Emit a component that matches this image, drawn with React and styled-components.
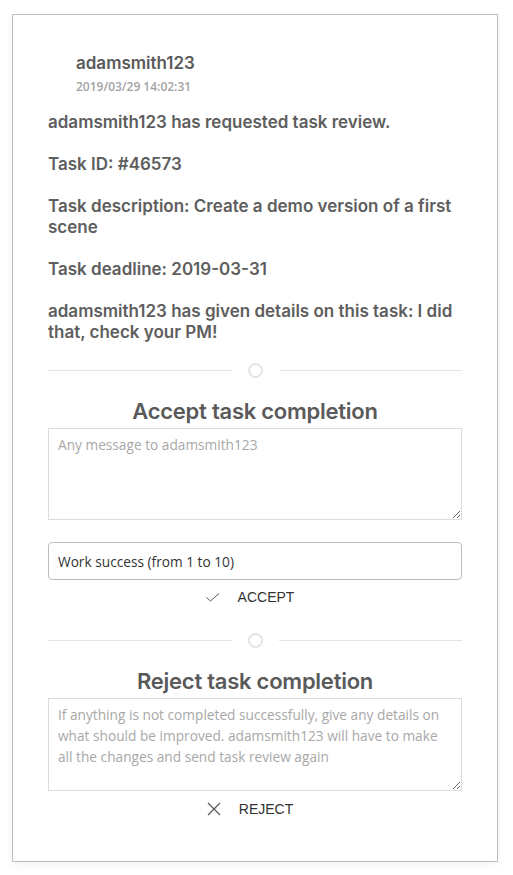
import React from "react";
import styled, { createGlobalStyle } from "styled-components";

const Global = createGlobalStyle`
  html, body { margin: 0; padding: 0; background: #fff; }
  body { font-family: "Inter", "Open Sans", sans-serif; }
  * { box-sizing: border-box; }
`;

const Page = styled.div`
  padding: 14px 15px 12px 12px;
  width: 513px;
`;

const Card = styled.div`
  border: 1px solid #bdbdbd;
  background: #fff;
  box-shadow: 0 2px 8px rgba(0, 0, 0, 0.06);
  padding: 37px 35px 43px 35px;
  display: flex;
  flex-direction: column;
`;

const Header = styled.div`
  display: flex;
  align-items: flex-start;
  gap: 8px;
`;

const Avatar = styled.div`
  width: 20px;
  height: 20px;
  flex: none;
`;

const Who = styled.div`
  display: flex;
  flex-direction: column;
`;

const UserName = styled.div`
  font-family: "Inter", sans-serif;
  font-weight: 600;
  font-size: 17px;
  line-height: 22px;
  color: #5a5a5a;
`;

const Stamp = styled.div`
  font-family: "Open Sans", sans-serif;
  font-weight: 600;
  font-size: 12px;
  line-height: 16px;
  color: #a3a3a3;
  margin-top: 5px;
`;

const Body = styled.div`
  margin-top: 17px;
  display: flex;
  flex-direction: column;
  gap: 21px;
`;

const Para = styled.p`
  margin: 0;
  font-family: "Inter", sans-serif;
  font-weight: 600;
  font-size: 17px;
  line-height: 21px;
  color: #5e5e5e;
`;

const Divider = styled.div`
  display: flex;
  align-items: center;
  gap: 16px;
  margin-top: ${(p) => p.$top}px;
`;

const Line = styled.div`
  flex: 1;
  height: 1px;
  background: #e4e4e4;
`;

const Dot = styled.div`
  width: 15px;
  height: 15px;
  border-radius: 50%;
  border: 2px solid #e4e4e4;
  flex: none;
`;

const Title = styled.h2`
  margin: 19px 0 0;
  text-align: center;
  font-family: "Inter", sans-serif;
  font-weight: 600;
  font-size: 22px;
  line-height: 28px;
  letter-spacing: -0.25px;
  color: #5a5a5a;
`;

const Area = styled.textarea`
  display: block;
  width: 100%;
  height: ${(p) => p.$h}px;
  margin-top: 3px;
  border: 1px solid #dcdcdc;
  border-radius: 0;
  padding: 5px 9px;
  font-family: "Open Sans", sans-serif;
  font-size: 13.7px;
  line-height: 21px;
  color: #333;
  resize: vertical;
  outline: none;
  &::placeholder { color: #a8a8a8; }
`;

const Field = styled.input`
  display: block;
  width: 100%;
  height: 38px;
  margin-top: 22px;
  border: 1px solid #bdbdbd;
  border-radius: 4px;
  padding: 0 9px;
  font-family: "Open Sans", sans-serif;
  font-size: 13.7px;
  color: #333;
  outline: none;
  &::placeholder { color: #333; }
`;

const Action = styled.button`
  align-self: center;
  display: flex;
  align-items: center;
  gap: 18px;
  margin-top: ${(p) => p.$top}px;
  background: none;
  border: 0;
  padding: 0 10px 0 0;
  cursor: pointer;
  font-family: "Liberation Sans", Arial, sans-serif;
  font-size: 14px;
  line-height: 18px;
  color: #333;
  svg { display: block; }
`;

const Check = () => (
  <svg width="14" height="14" viewBox="0 0 14 14" fill="none">
    <path d="M0.5 7.5 L4.5 11 L13 3.5" stroke="#555" strokeWidth="1" />
  </svg>
);

const Cross = () => (
  <svg width="14" height="14" viewBox="0 0 14 14" fill="none">
    <path d="M1 1 L13 13 M13 1 L1 13" stroke="#555" strokeWidth="1.1" />
  </svg>
);

export default function App() {
  return (
    <>
      <Global />
      <Page>
        <Card>
          <Header>
            <Avatar />
            <Who>
              <UserName>adamsmith123</UserName>
              <Stamp>2019/03/29 14:02:31</Stamp>
            </Who>
          </Header>
          <Body>
            <Para>adamsmith123 has requested task review.</Para>
            <Para>Task ID: #46573</Para>
            <Para>Task description: Create a demo version of a first scene</Para>
            <Para>Task deadline: 2019-03-31</Para>
            <Para>adamsmith123 has given details on this task: I did that, check your PM!</Para>
          </Body>
          <Divider $top={20}>
            <Line />
            <Dot />
            <Line />
          </Divider>
          <Title>Accept task completion</Title>
          <Area $h={92} placeholder="Any message to adamsmith123" />
          <Field placeholder="Work success (from 1 to 10)" />
          <Action $top={8}>
            <Check />
            ACCEPT
          </Action>
          <Divider $top={27}>
            <Line />
            <Dot />
            <Line />
          </Divider>
          <Title>Reject task completion</Title>
          <Area
            $h={93}
            placeholder="If anything is not completed successfully, give any details on what should be improved. adamsmith123 will have to make all the changes and send task review again"
          />
          <Action $top={9}>
            <Cross />
            REJECT
          </Action>
        </Card>
      </Page>
    </>
  );
}
